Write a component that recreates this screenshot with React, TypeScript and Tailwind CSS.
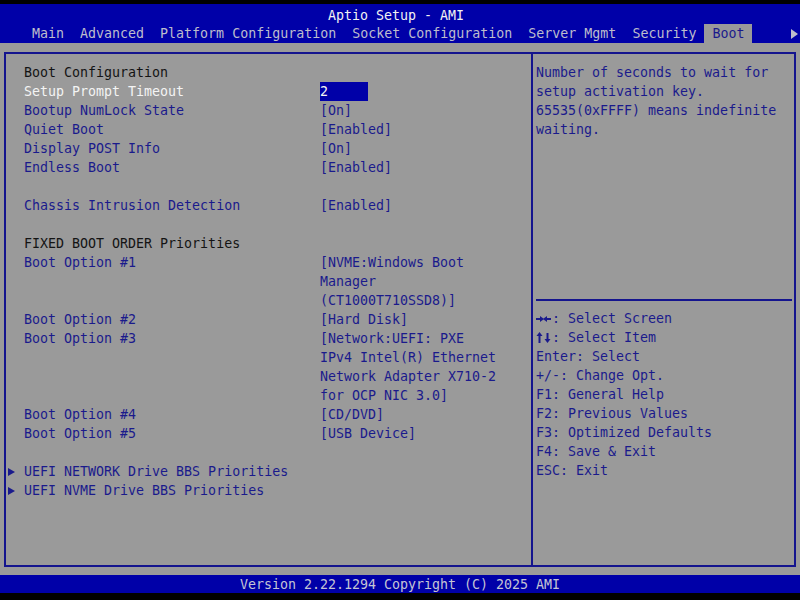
import React from "react";

const BLUE_TEXT = "text-[#1a1a8c]";

type Row =
  | { kind: "blank" }
  | { kind: "head"; text: string }
  | { kind: "item"; label: string; value: string[]; selected?: boolean }
  | { kind: "sub"; label: string };

const rows: Row[] = [
  { kind: "head", text: "Boot Configuration" },
  { kind: "item", label: "Setup Prompt Timeout", value: ["2"], selected: true },
  { kind: "item", label: "Bootup NumLock State", value: ["[On]"] },
  { kind: "item", label: "Quiet Boot", value: ["[Enabled]"] },
  { kind: "item", label: "Display POST Info", value: ["[On]"] },
  { kind: "item", label: "Endless Boot", value: ["[Enabled]"] },
  { kind: "blank" },
  { kind: "item", label: "Chassis Intrusion Detection", value: ["[Enabled]"] },
  { kind: "blank" },
  { kind: "head", text: "FIXED BOOT ORDER Priorities" },
  {
    kind: "item",
    label: "Boot Option #1",
    value: ["[NVME:Windows Boot", "Manager", "(CT1000T710SSD8)]"],
  },
  { kind: "item", label: "Boot Option #2", value: ["[Hard Disk]"] },
  {
    kind: "item",
    label: "Boot Option #3",
    value: [
      "[Network:UEFI: PXE",
      "IPv4 Intel(R) Ethernet",
      "Network Adapter X710-2",
      "for OCP NIC 3.0]",
    ],
  },
  { kind: "item", label: "Boot Option #4", value: ["[CD/DVD]"] },
  { kind: "item", label: "Boot Option #5", value: ["[USB Device]"] },
  { kind: "blank" },
  { kind: "sub", label: "UEFI NETWORK Drive BBS Priorities" },
  { kind: "sub", label: "UEFI NVME Drive BBS Priorities" },
];

const tabs = [
  "Main",
  "Advanced",
  "Platform Configuration",
  "Socket Configuration",
  "Server Mgmt",
  "Security",
  "Boot",
];

const help = [
  "Number of seconds to wait for",
  "setup activation key.",
  "65535(0xFFFF) means indefinite",
  "waiting.",
];

function LRArrows() {
  return (
    <svg width="16" height="19" viewBox="0 0 16 19" className="inline-block align-top">
      <g stroke="#1a1a8c" strokeWidth="2" fill="#1a1a8c">
        <line x1="0" y1="10" x2="6" y2="10" />
        <line x1="9" y1="10" x2="15" y2="10" />
      </g>
      <polygon points="4,7 8,10 4,13" fill="#1a1a8c" />
      <polygon points="11,7 7,10 11,13" fill="#1a1a8c" />
    </svg>
  );
}

function UDArrows() {
  return (
    <svg width="16" height="19" viewBox="0 0 16 19" className="inline-block align-top">
      <g stroke="#1a1a8c" strokeWidth="2">
        <line x1="3.5" y1="7" x2="3.5" y2="15" />
        <line x1="11.5" y1="5" x2="11.5" y2="12" />
      </g>
      <polygon points="0.5,8 3.5,4 6.5,8" fill="#1a1a8c" />
      <polygon points="8.5,11 11.5,15 14.5,11" fill="#1a1a8c" />
    </svg>
  );
}

const keys: [React.ReactNode, string][] = [
  [<LRArrows />, ": Select Screen"],
  [<UDArrows />, ": Select Item"],
  [null, "Enter: Select"],
  [null, "+/-: Change Opt."],
  [null, "F1: General Help"],
  [null, "F2: Previous Values"],
  [null, "F3: Optimized Defaults"],
  [null, "F4: Save & Exit"],
  [null, "ESC: Exit"],
];

function Tri() {
  return (
    <svg width="8" height="10" viewBox="0 0 8 10" className="block">
      <polygon points="0,1 7,5 0,9" fill="#1a1a8c" />
    </svg>
  );
}

export default function App() {
  return (
    <div
      className="w-[800px] h-[600px] bg-black flex flex-col text-[13.3px] leading-[19px] whitespace-pre overflow-hidden"
      style={{ fontFamily: '"DejaVu Sans Mono", "Liberation Mono", monospace' }}
    >
      <div className="h-[4px] shrink-0" />
      <header className="h-[39px] shrink-0 bg-[#0000a8] flex flex-col">
        <div className="h-[20px] leading-[19px] pt-[2px] pl-[328px] text-[#f2f2f2]">
          Aptio Setup - AMI
        </div>
        <div className="h-[19px] flex items-stretch pl-[24px] text-[#bdbdcc]">
          {tabs.map((t) => (
            <div
              key={t}
              className={
                "px-[8px] h-[19px] leading-[19px] " +
                (t === "Boot" ? "bg-[#9a9a9a] text-[#1a1a8c]" : "")
              }
            >
              {t}
            </div>
          ))}
          <div className="ml-auto pr-[2px] flex items-center">
            <svg width="7" height="10" viewBox="0 0 7 10">
              <polygon points="0,0 7,5 0,10" fill="#bdbdcc" />
            </svg>
          </div>
        </div>
      </header>

      <main className="flex-1 bg-[#9a9a9a] px-[4px] pt-[9px] pb-[8px] flex">
        <div className="flex-1 border-2 border-[#14148e] flex">
          {/* left pane */}
          <div className="w-[527px] border-r-2 border-[#14148e] pt-[9px]">
            {rows.map((r, i) => {
              if (r.kind === "blank") return <div key={i} className="h-[19px]" />;
              if (r.kind === "head")
                return (
                  <div key={i} className="h-[19px] pl-[18px] text-[#141414]">
                    {r.text}
                  </div>
                );
              if (r.kind === "sub")
                return (
                  <div key={i} className="h-[19px] flex items-center">
                    <div className="w-[18px] pl-[2px]">
                      <Tri />
                    </div>
                    <span className={BLUE_TEXT}>{r.label}</span>
                  </div>
                );
              return (
                <div key={i} className="flex">
                  <div
                    className={
                      "w-[314px] pl-[18px] " +
                      (r.selected ? "text-[#f4f4f4]" : BLUE_TEXT)
                    }
                  >
                    {r.label}
                  </div>
                  <div className="flex flex-col">
                    {r.value.map((v, j) =>
                      r.selected ? (
                        <div key={j} className="w-[48px] bg-[#0000a8] text-[#f4f4f4]">
                          {v}
                        </div>
                      ) : (
                        <div key={j} className={BLUE_TEXT}>
                          {v}
                        </div>
                      )
                    )}
                  </div>
                </div>
              );
            })}
          </div>

          {/* right pane */}
          <div className="flex-1 flex flex-col">
            <div className={"h-[245px] pt-[9px] pl-[3px] " + BLUE_TEXT}>
              {help.map((h) => (
                <div key={h}>{h}</div>
              ))}
            </div>
            <div className="h-[2px] bg-[#14148e] ml-[3px] mr-[2px]" />
            <div className={"pt-[8px] pl-[3px] " + BLUE_TEXT}>
              {keys.map(([a, b]) => (
                <div key={b} className="h-[19px]">
                  {a}
                  {b}
                </div>
              ))}
            </div>
          </div>
        </div>
      </main>

      <footer className="h-[18px] shrink-0 bg-[#0000a8] text-[#c4c4d4] leading-[18px] pt-[1px] text-center">
        Version 2.22.1294 Copyright (C) 2025 AMI
      </footer>
      <div className="h-[7px] shrink-0" />
    </div>
  );
}
